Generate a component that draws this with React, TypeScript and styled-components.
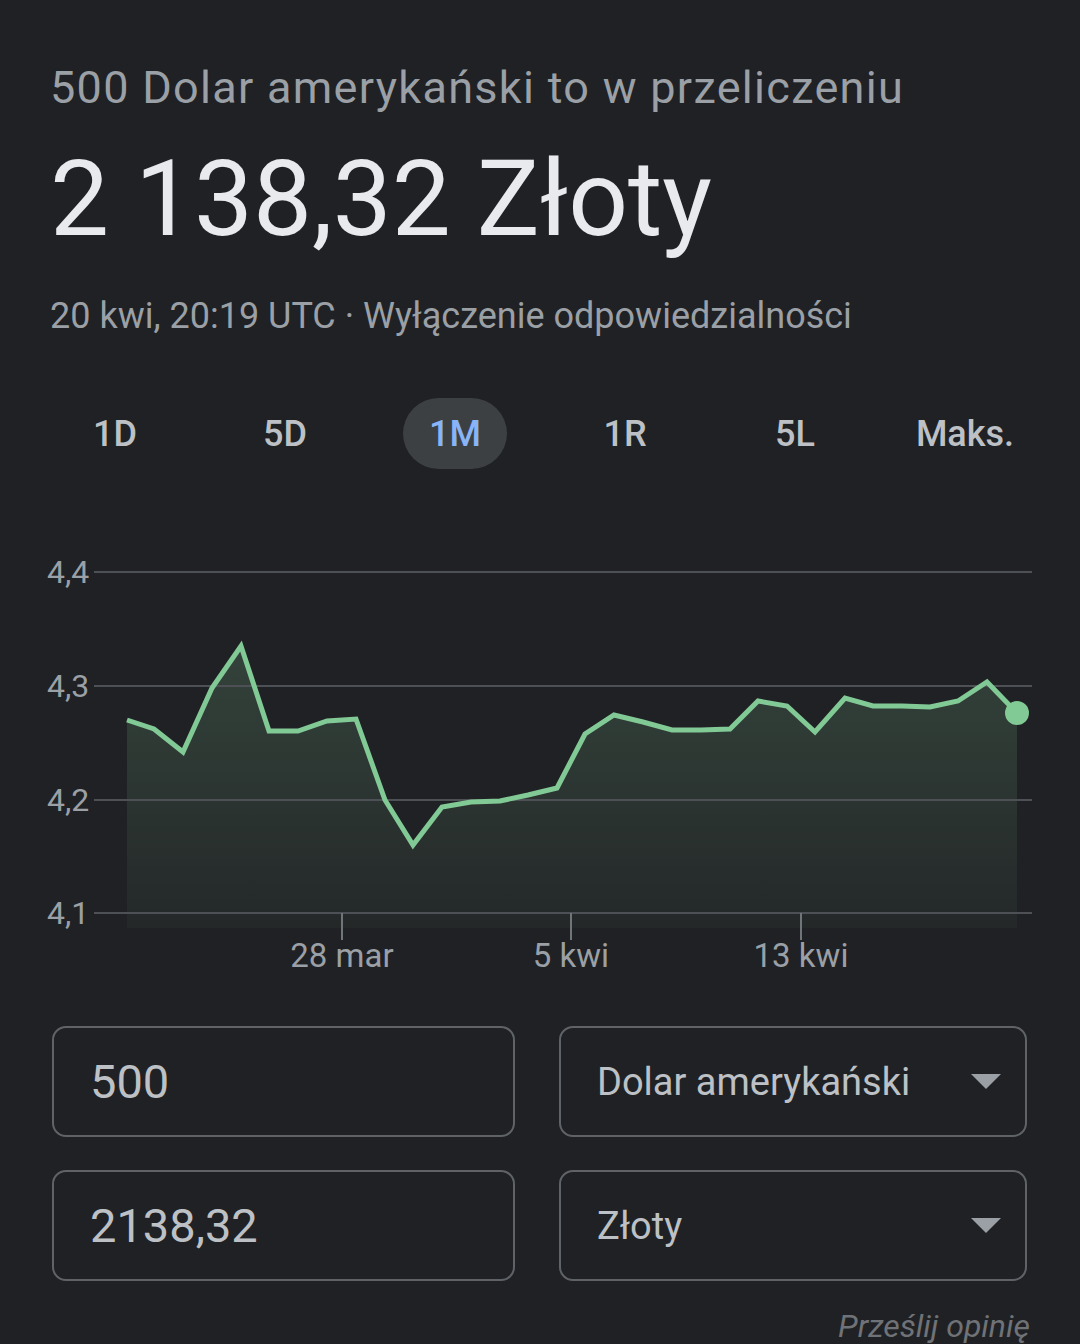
import React from 'react';
import styled, { createGlobalStyle } from 'styled-components';

const GlobalStyle = createGlobalStyle`
    html, body {
        margin: 0;
        padding: 0;
        background: #202124;
    }
    body {
        font-family: Roboto, "Noto Sans", "Liberation Sans", sans-serif;
    }
`;

const Page = styled.div`
    width: 1080px;
    height: 1344px;
    overflow: hidden;
    background: #202124;
    padding-top: 62px;
    box-sizing: border-box;
`;

const Header = styled.div`
    padding-left: 50px;
    display: flex;
    flex-direction: column;
`;

const Subtitle = styled.div`
    font-size: 45px;
    line-height: 52px;
    letter-spacing: 1.3px;
    color: #9aa0a6;
`;

const Amount = styled.div`
    margin-top: 26px;
    font-size: 105px;
    line-height: 120px;
    color: #e8eaed;
`;

const Meta = styled.div`
    margin-top: 34px;
    font-size: 36px;
    line-height: 44px;
    color: #9aa0a6;
`;

const Tabs = styled.div`
    margin-top: 60px;
    padding: 0 30px;
    display: grid;
    grid-template-columns: repeat(6, 1fr);
`;

const Tab = styled.div<{ $active?: boolean }>`
    justify-self: center;
    height: 71px;
    padding: 0 26px;
    border-radius: 36px;
    display: flex;
    align-items: center;
    font-size: 36px;
    font-weight: 500;
    color: ${(p) => (p.$active ? '#8ab4f8' : '#bdc1c6')};
    background: ${(p) => (p.$active ? '#3c4043' : 'transparent')};
`;

const ChartSvg = styled.svg`
    display: block;
    margin-top: 71px;
    width: 1080px;
    height: 460px;
`;

const Converter = styled.div`
    margin-top: 26px;
    padding: 0 53px 0 52px;
    display: grid;
    grid-template-columns: 463px 468px;
    column-gap: 44px;
    row-gap: 33px;
`;

const Field = styled.div`
    height: 111px;
    box-sizing: border-box;
    border: 2px solid #5f6368;
    border-radius: 14px;
    display: flex;
    align-items: center;
    justify-content: space-between;
    padding: 0 22px 0 36px;
`;

const Value = styled.span`
    font-size: 47px;
    color: #bdc1c6;
`;

const Unit = styled.span`
    font-size: 38px;
    color: #bdc1c6;
`;

const Caret = styled.span`
    width: 0;
    height: 0;
    border-left: 15px solid transparent;
    border-right: 15px solid transparent;
    border-top: 15px solid #9aa0a6;
    margin-right: 2px;
`;

const Feedback = styled.div`
    margin-top: 26px;
    padding-right: 50px;
    text-align: right;
    font-size: 32px;
    font-style: italic;
    color: #6f7276;
`;

const tabs = ['1D', '5D', '1M', '1R', '5L', 'Maks.'];

const points: [number, number][] = [
    [127, 720], [154, 729], [183, 752], [212, 688], [241, 646], [269, 731],
    [298, 731], [327, 721], [356, 719], [385, 800], [413, 845], [442, 807],
    [471, 802], [500, 801], [528, 795], [557, 788], [585, 734], [614, 715],
    [643, 722], [672, 730], [701, 730], [730, 729], [758, 701], [787, 706],
    [815, 732], [845, 698], [873, 706], [902, 706], [930, 707], [958, 701],
    [987, 682], [1017, 713],
];

const gridLines = [
    { y: 572, label: '4,4' },
    { y: 686, label: '4,3' },
    { y: 800, label: '4,2' },
    { y: 913, label: '4,1' },
];

const ticks = [
    { x: 342, label: '28 mar' },
    { x: 571, label: '5 kwi' },
    { x: 801, label: '13 kwi' },
];

const Chart = () => {
    const line = points.map(([x, y]) => `${x},${y}`).join(' ');
    const area = `M127,928 L${line.replace(/ /g, ' L')} L1017,928 Z`;
    const [lx, ly] = points[points.length - 1];

    return (
        <ChartSvg viewBox='0 540 1080 460'>
            <defs>
                <linearGradient id='fillGrad' x1='0' y1='0' x2='0' y2='1'>
                    <stop offset='0%' stopColor='#81c995' stopOpacity='0.2' />
                    <stop offset='100%' stopColor='#81c995' stopOpacity='0.04' />
                </linearGradient>
            </defs>
            <path d={area} fill='url(#fillGrad)' />
            {gridLines.map((g) => (
                <g key={g.label}>
                    <line x1='94' x2='1032' y1={g.y} y2={g.y} stroke='#4d5054' strokeWidth='2' />
                    <text
                        x='47'
                        y={g.y + 11}
                        fill='#9aa0a6'
                        fontSize='32'
                        fontFamily='Roboto, sans-serif'
                    >
                        {g.label}
                    </text>
                </g>
            ))}
            {ticks.map((t) => (
                <g key={t.label}>
                    <line x1={t.x} x2={t.x} y1='913' y2='940' stroke='#70757a' strokeWidth='2' />
                    <text
                        x={t.x}
                        y='967'
                        fill='#9aa0a6'
                        fontSize='33'
                        textAnchor='middle'
                        fontFamily='Roboto, sans-serif'
                    >
                        {t.label}
                    </text>
                </g>
            ))}
            <polyline
                points={line}
                fill='none'
                stroke='#81c995'
                strokeWidth='5'
                strokeLinejoin='miter'
            />
            <circle cx={lx} cy={ly} r='12' fill='#81c995' />
        </ChartSvg>
    );
};

const App = () => (
    <Page>
        <GlobalStyle />
        <Header>
            <Subtitle>500 Dolar amerykański to w przeliczeniu</Subtitle>
            <Amount>2 138,32 Złoty</Amount>
            <Meta>20 kwi, 20:19 UTC · Wyłączenie odpowiedzialności</Meta>
        </Header>
        <Tabs>
            {tabs.map((t) => (
                <Tab key={t} $active={t === '1M'}>{t}</Tab>
            ))}
        </Tabs>
        <Chart />
        <Converter>
            <Field>
                <Value>500</Value>
            </Field>
            <Field>
                <Unit>Dolar amerykański</Unit>
                <Caret />
            </Field>
            <Field>
                <Value>2138,32</Value>
            </Field>
            <Field>
                <Unit>Złoty</Unit>
                <Caret />
            </Field>
        </Converter>
        <Feedback>Prześlij opinię</Feedback>
    </Page>
);

export default App;
